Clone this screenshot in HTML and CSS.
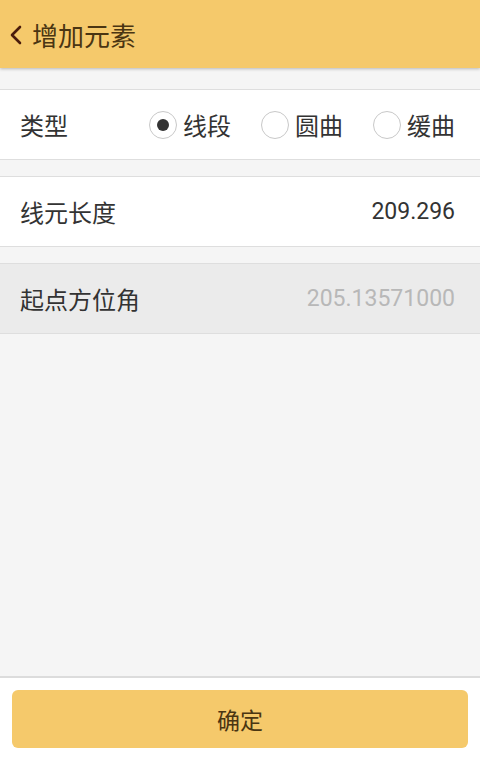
FILE: index.html
```html
<!DOCTYPE html>
<html lang="zh-CN">
<head>
<meta charset="utf-8">
<title>增加元素</title>
<link rel="stylesheet" href="styles.css">
</head>
<body>
<div class="app">
  <header class="topbar">
    <svg class="back" width="14" height="20" viewBox="0 0 14 20"><path d="M11 2 L3 10 L11 18" fill="none" stroke="#4a1c0c" stroke-width="2.6" stroke-linecap="round" stroke-linejoin="round"/></svg>
    <h1 class="title">增加元素</h1>
  </header>
  <main class="content">
    <section class="row">
      <span class="label">类型</span>
      <div class="radios">
        <label class="radio"><span class="dot checked"></span><span class="rtext">线段</span></label>
        <label class="radio"><span class="dot"></span><span class="rtext">圆曲</span></label>
        <label class="radio"><span class="dot"></span><span class="rtext">缓曲</span></label>
      </div>
    </section>
    <section class="row">
      <span class="label">线元长度</span>
      <span class="value">209.296</span>
    </section>
    <section class="row disabled">
      <span class="label">起点方位角</span>
      <span class="value muted">205.13571000</span>
    </section>
  </main>
  <footer class="footer">
    <button class="confirm">确定</button>
  </footer>
</div>
</body>
</html>
```
FILE: styles.css
```css
* { box-sizing: border-box; }
html, body { margin: 0; padding: 0; }
body {
  width: 480px;
  height: 760px;
  font-family: "Noto Sans CJK SC", "Noto Sans", sans-serif;
  background: #f5f5f5;
  color: #333;
}
.app {
  display: flex;
  flex-direction: column;
  height: 760px;
}
.topbar {
  height: 68px;
  background: #f5c96b;
  display: flex;
  align-items: center;
  padding-left: 9px;
  box-shadow: 0 1px 3px rgba(0,0,0,0.25);
  position: relative;
  z-index: 1;
}
.back { margin-right: 9px; margin-top: 1px; }
.title {
  margin: 0;
  font-size: 26px;
  font-weight: 400;
  color: #4a3512;
}
.content {
  flex: 1;
  display: flex;
  flex-direction: column;
  gap: 16px;
  padding-top: 21px;
  background: #f5f5f5;
}
.row {
  height: 71px;
  background: #fff;
  border-top: 1px solid #dedede;
  border-bottom: 1px solid #dedede;
  display: flex;
  align-items: center;
  justify-content: space-between;
  padding: 0 25px 0 20px;
  font-size: 24px;
}
.row.disabled { background: #ebebeb; }
.label { color: #333; }
.value { font-family: Roboto, "Noto Sans", sans-serif; font-size: 23px; color: #333; }
.value.muted { color: #b8b8b8; }
.radios { display: flex; gap: 30px; }
.radio { display: flex; align-items: center; gap: 6px; }
.dot {
  width: 28px;
  height: 28px;
  border-radius: 50%;
  border: 1px solid #c8c8c8;
  background: #fff;
  display: flex;
  align-items: center;
  justify-content: center;
}
.dot.checked::after {
  content: "";
  width: 12px;
  height: 12px;
  border-radius: 50%;
  background: #333;
}
.footer {
  height: 84px;
  background: #fff;
  border-top: 2px solid #dcdcdc;
  padding: 12px 12px 0;
}
.confirm {
  width: 100%;
  height: 58px;
  border: none;
  border-radius: 6px;
  background: #f5c96b;
  color: #4a3512;
  font-family: "Noto Sans CJK SC", sans-serif;
  font-size: 23px;
}
```
